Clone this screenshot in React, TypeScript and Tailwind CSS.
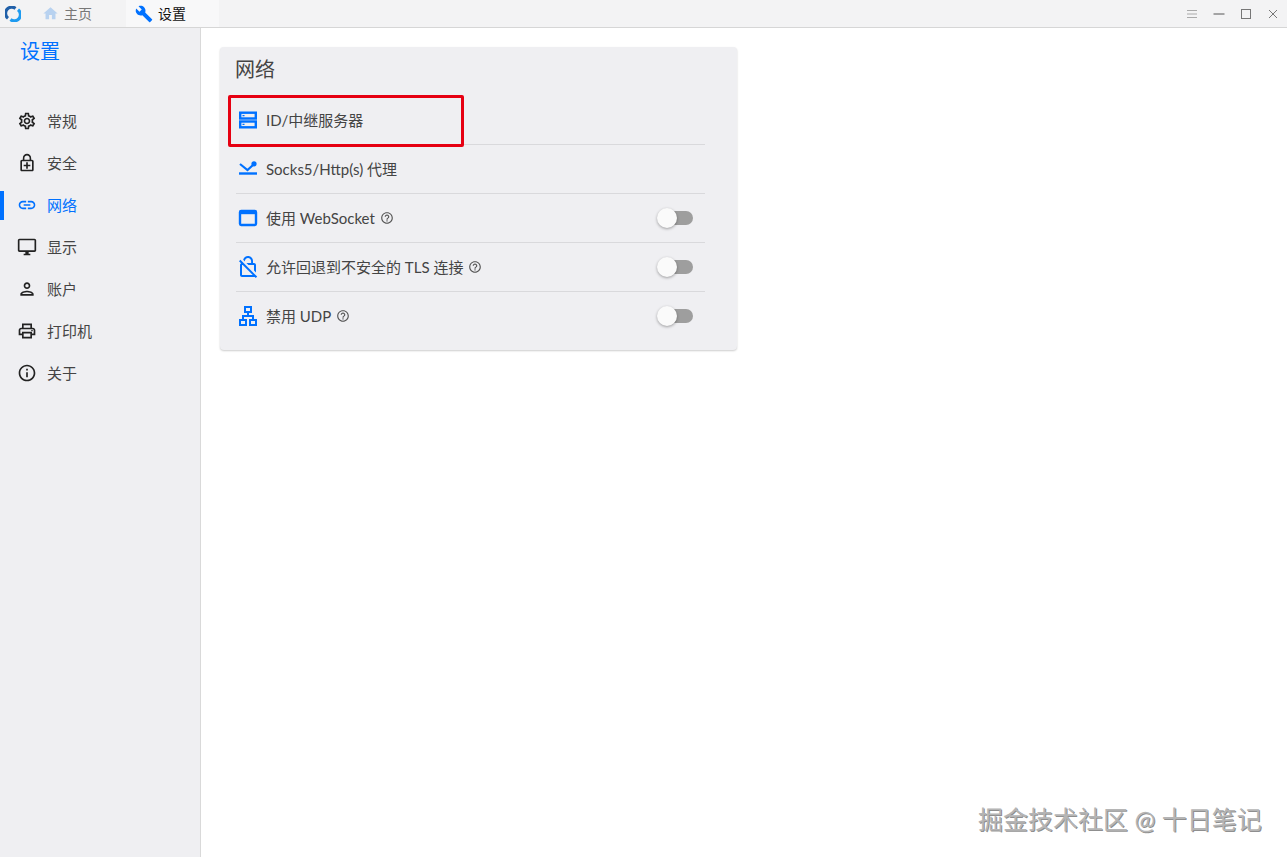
import type { ReactNode } from "react";
import {
  MdBuild,
  MdHome,
  MdHelpOutline,
  MdLink,
  MdOutlineDesktopWindows,
  MdOutlineEnhancedEncryption,
  MdOutlineInfo,
  MdOutlineLan,
  MdOutlineNoEncryption,
  MdOutlinePerson,
  MdOutlinePrint,
  MdOutlineSettings,
} from "react-icons/md";

const font = { fontFamily: '"Lato", "Noto Sans CJK SC", sans-serif' };

const navItems = [
  { label: "常规", icon: <MdOutlineSettings size={20} /> },
  { label: "安全", icon: <MdOutlineEnhancedEncryption size={20} /> },
  { label: "网络", icon: <MdLink size={20} />, active: true },
  { label: "显示", icon: <MdOutlineDesktopWindows size={20} /> },
  { label: "账户", icon: <MdOutlinePerson size={20} /> },
  { label: "打印机", icon: <MdOutlinePrint size={20} /> },
  { label: "关于", icon: <MdOutlineInfo size={20} /> },
];

function ServerIcon() {
  return (
    <svg width="20" height="20" viewBox="0 0 20 20" fill="none" stroke="currentColor" strokeWidth="2.4">
      <rect x="2.2" y="2.7" width="15.6" height="5.8" />
      <rect x="2.2" y="11.5" width="15.6" height="5.8" />
      <path d="M4.5 5.6H6.5M4.5 14.4H6.5" strokeWidth="1.2" />
    </svg>
  );
}

function ProxyIcon() {
  return (
    <svg width="20" height="20" viewBox="0 0 20 20" fill="none" stroke="currentColor">
      <path d="M2 5 L9.5 11 L15 6" strokeWidth="2.2" />
      <circle cx="16" cy="4.8" r="2.6" fill="currentColor" stroke="none" />
      <path d="M1 14.5 H19" strokeWidth="2.4" />
    </svg>
  );
}

function WindowIcon() {
  return (
    <svg width="20" height="20" viewBox="0 0 20 20" fill="none">
      <rect x="2" y="3" width="16" height="14" rx="1.2" stroke="currentColor" strokeWidth="2.4" />
      <path d="M2 4.6 H18" stroke="currentColor" strokeWidth="3.2" />
    </svg>
  );
}

function Logo() {
  return (
    <svg width="16" height="16" viewBox="0 0 16 16" fill="none">
      <path d="M3 12.2 A6 6 0 0 1 10.5 2.4" stroke="#1f5fa8" strokeWidth="3.2" />
      <path d="M13 3.8 A6 6 0 0 1 5.5 13.6" stroke="#1e9bf0" strokeWidth="3.2" />
    </svg>
  );
}

function Row({ icon, label, help, toggle, last }: { icon: ReactNode; label: string; help?: boolean; toggle?: boolean; last?: boolean }) {
  return (
    <div className={`flex h-[49px] items-center border-b ${last ? "border-transparent" : "border-[#d9d9dc]"}`}>
      <span className="mr-[6px] flex w-[24px] justify-center text-[#0071ff]">{icon}</span>
      <span className="text-[15px] text-[#444]">{label}</span>
      {help && <MdHelpOutline size={14} className="ml-[5px] text-[#555]" />}
      {toggle && (
        <div className="relative ml-auto mr-[12px] h-[14px] w-[34px]">
          <div className="absolute right-0 top-0 h-[14px] w-[30px] rounded-full bg-[#9e9e9e]" />
          <div className="absolute -left-[2px] -top-[3px] h-[20px] w-[20px] rounded-full bg-[#fafafa] shadow-[0_1px_3px_rgba(0,0,0,0.35)]" />
        </div>
      )}
    </div>
  );
}

export default function App() {
  return (
    <div className="relative flex h-[857px] w-[1287px] flex-col overflow-hidden bg-white" style={font}>
      {/* tab bar */}
      <div className="flex h-[28px] shrink-0 items-center border-b border-[#d6d6d6] bg-[#f3f3f4]">
        <div className="ml-[5px] flex w-[37px]"><Logo /></div>
        <div className="flex h-full w-[84px] items-center">
          <MdHome size={17} className="text-[#b8d2f0]" />
          <span className="ml-[5px] text-[14px] text-[#777]">主页</span>
        </div>
        <div className="flex h-full w-[93px] items-center bg-[#f8f8f9] pl-[9px]">
          <MdBuild size={18} className="text-[#0071ff]" />
          <span className="ml-[5px] text-[14px] text-[#111]">设置</span>
        </div>
        <div className="ml-auto flex items-center gap-[15px] pr-[8px]">
          <svg width="12" height="12" viewBox="0 0 12 12" stroke="#aaa"><path d="M1 2.5H11M1 6H11M1 9.5H11" /></svg>
          <svg width="12" height="12" viewBox="0 0 12 12" stroke="#555"><path d="M0.5 6H11.5" /></svg>
          <svg width="12" height="12" viewBox="0 0 12 12" stroke="#777" fill="none"><rect x="1.5" y="1.5" width="9" height="9" /></svg>
          <svg width="12" height="12" viewBox="0 0 12 12" stroke="#777"><path d="M2 2L10 10M10 2L2 10" /></svg>
        </div>
      </div>

      <div className="flex min-h-0 flex-1">
        {/* sidebar */}
        <aside className="w-[201px] shrink-0 border-r border-[#d9d9d9] bg-[#efeff2]">
          <h1 className="ml-[20px] mt-[9px] h-[29px] text-[20px] leading-[28px] text-[#0071ff]">设置</h1>
          <nav className="mt-[34px]">
            {navItems.map((item) => (
              <div key={item.label} className={`relative flex h-[42px] items-center pl-[17px] ${item.active ? "text-[#0071ff]" : "text-[#222]"}`}>
                {item.active && <span className="absolute left-0 top-[7px] h-[29px] w-[4px] bg-[#0071ff]" />}
                {item.icon}
                <span className={`ml-[10px] text-[15px] ${item.active ? "text-[#0071ff]" : "text-[#444]"}`}>{item.label}</span>
              </div>
            ))}
          </nav>
        </aside>

        {/* main */}
        <main className="flex-1 pl-[19px] pt-[19px]">
          <section className="h-[303px] w-[517px] rounded-[4px] bg-[#efeff2] pl-[16px] pr-[32px] shadow-[0_1px_2px_rgba(0,0,0,0.2)]">
            <h2 className="-ml-[1px] h-[49px] pt-[8px] text-[20px] leading-[28px] text-[#444]">网络</h2>
            <Row icon={<ServerIcon />} label="ID/中继服务器" />
            <Row icon={<ProxyIcon />} label="Socks5/Http(s) 代理" />
            <Row icon={<WindowIcon />} label="使用 WebSocket" help toggle />
            <Row icon={<MdOutlineNoEncryption size={24} />} label="允许回退到不安全的 TLS 连接" help toggle />
            <Row icon={<MdOutlineLan size={24} />} label="禁用 UDP" help toggle last />
          </section>
        </main>
      </div>

      {/* annotation */}
      <div className="absolute left-[228px] top-[95px] h-[52px] w-[236px] rounded-[2px] border-[3px] border-[#e60012]" />
      {/* watermark */}
      <div className="absolute left-[978px] top-[804px] text-[25px] leading-[30px] text-[#b5b5b5] [text-shadow:1px_1px_0_rgba(0,0,0,0.45)]">
        掘金技术社区 @ 十日笔记
      </div>
    </div>
  );
}
